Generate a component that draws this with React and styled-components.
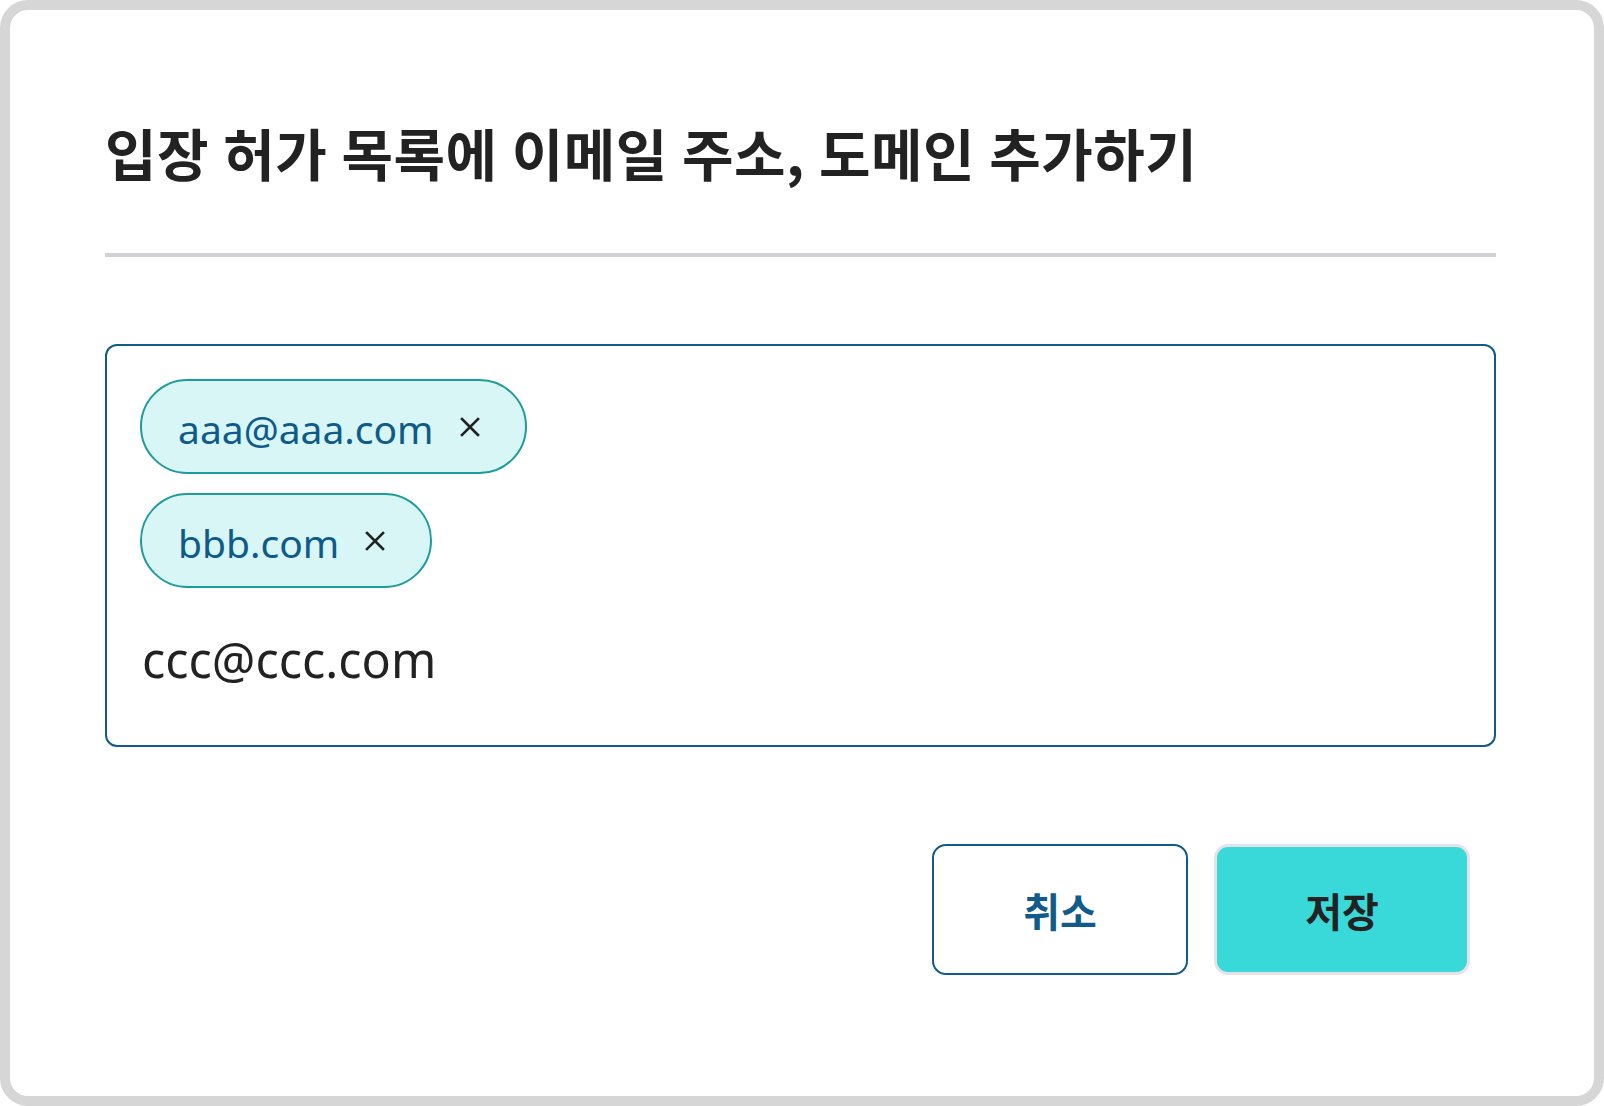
import styled, { createGlobalStyle } from 'styled-components'

const GlobalStyle = createGlobalStyle`
  html, body {
    margin: 0;
    padding: 0;
    background: #ffffff;
  }
  * {
    box-sizing: border-box;
  }
`

const emails = ['aaa@aaa.com', 'bbb.com']

function CloseIcon() {
  return (
    <svg width='20' height='20' viewBox='0 0 20 20' fill='none'>
      <path d='M2 2L18 18M18 2L2 18' stroke='#222222' strokeWidth='2.6' strokeLinecap='square' />
    </svg>
  )
}

export default function App() {
  return (
    <>
      <GlobalStyle />
      <Frame>
        <Title>입장 허가 목록에 이메일 주소, 도메인 추가하기</Title>
        <Divider />
        <Field>
          {emails.map((mail) => (
            <Chip key={mail}>
              <ChipText>{mail}</ChipText>
              <RemoveButton type='button' aria-label='삭제'>
                <CloseIcon />
              </RemoveButton>
            </Chip>
          ))}
          <EmailInput defaultValue='ccc@ccc.com' />
        </Field>
        <Actions>
          <Button>취소</Button>
          <Button primary>저장</Button>
        </Actions>
      </Frame>
    </>
  )
}

const Frame = styled.div`
  width: 100%;
  height: 100vh;
  border: 10px solid #d6d6d6;
  border-radius: 28px;
  background: #ffffff;
  padding: 0 98px 0 95px;
  display: flex;
  flex-direction: column;
  font-family: 'Noto Sans CJK KR', 'Noto Sans', sans-serif;
`

const Title = styled.h1`
  margin: 106px 0 0;
  font-size: 56px;
  font-weight: 700;
  line-height: 72px;
  letter-spacing: 0.5px;
  word-spacing: 1px;
  color: #222222;
`

const Divider = styled.div`
  margin-top: 65px;
  height: 4px;
  background: #d3d0d6;
`

const Field = styled.div`
  margin-top: 87px;
  border: 2.5px solid #115b8a;
  border-radius: 12px;
  padding: 33px 33px 52px;
  display: flex;
  flex-direction: column;
  align-items: flex-start;
  gap: 19px;
`

const Chip = styled.div`
  display: inline-flex;
  align-items: center;
  height: 95px;
  padding: 0 45px 0 36px;
  border: 2.5px solid #1e9b9b;
  border-radius: 48px;
  background: #d7f6f5;
  gap: 26px;
`

const ChipText = styled.span`
  font-family: 'Noto Sans', 'Open Sans', sans-serif;
  font-size: 39px;
  color: #0e5a8a;
  line-height: 1;
  margin-top: 4px;
`

const RemoveButton = styled.button`
  border: none;
  background: none;
  padding: 0;
  display: flex;
  cursor: pointer;
`

const EmailInput = styled.input`
  margin-top: 18px;
  width: 100%;
  border: none;
  outline: none;
  padding: 0 0 0 2px;
  font-family: 'Noto Sans', 'Open Sans', sans-serif;
  font-size: 48.5px;
  line-height: 68px;
  height: 68px;
  color: #222222;
  background: transparent;
`

const Actions = styled.div`
  margin-top: 97px;
  display: flex;
  justify-content: flex-end;
  gap: 26px;
  padding-right: 26px;
`

const Button = styled.button`
  width: 256px;
  height: 131px;
  border-radius: 14px;
  border: ${(p) => (p.primary ? '3px solid #e5e3e9' : '2.5px solid #115b8a')};
  background: ${(p) => (p.primary ? '#38d9d8' : '#ffffff')};
  color: ${(p) => (p.primary ? '#222222' : '#115b8a')};
  font-family: 'Noto Sans CJK KR', sans-serif;
  font-size: 40px;
  font-weight: 700;
  cursor: pointer;
`
